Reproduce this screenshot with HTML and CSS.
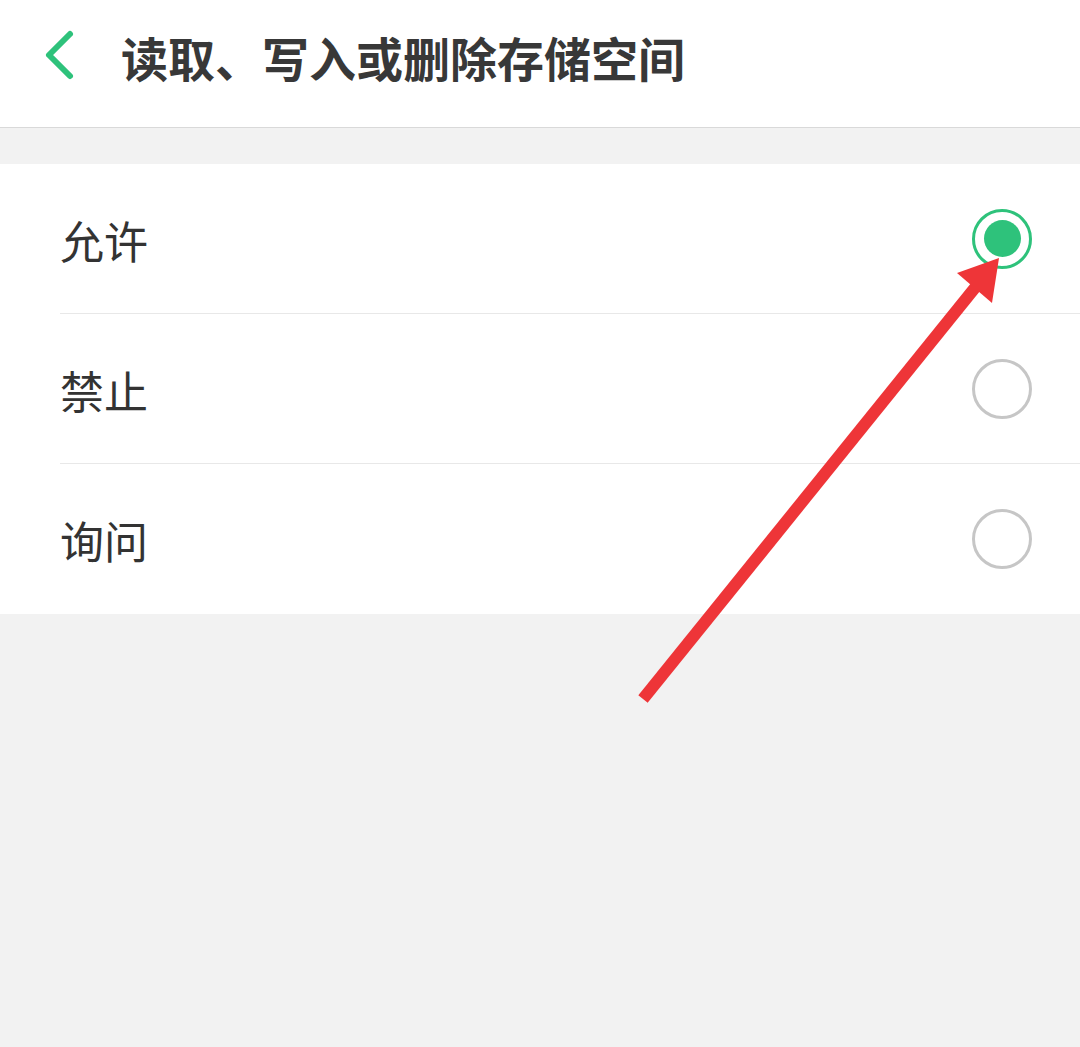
FILE: index.html
```html
<!DOCTYPE html>
<html lang="zh-CN">
<head>
<meta charset="utf-8">
<title>读取、写入或删除存储空间</title>
<link rel="stylesheet" href="styles.css">
</head>
<body>
<div class="page">
  <header class="topbar">
    <svg class="back" width="40" height="60" viewBox="0 0 40 60">
      <polyline points="30,7 9,28 30,49" fill="none" stroke="#2ec27b" stroke-width="6" stroke-linecap="round" stroke-linejoin="round"/>
    </svg>
    <h1 class="title">读取、写入或删除存储空间</h1>
  </header>
  <div class="gap"></div>
  <ul class="options">
    <li class="option"><span class="label">允许</span><span class="radio selected"></span></li>
    <li class="option"><span class="label">禁止</span><span class="radio"></span></li>
    <li class="option"><span class="label">询问</span><span class="radio"></span></li>
  </ul>
  <svg class="annot" width="1080" height="1047" viewBox="0 0 1080 1047">
    <line x1="643" y1="699" x2="978" y2="284" stroke="#ee3538" stroke-width="12"/>
    <polygon points="999,258 957,273 992,303" fill="#ee3538"/>
  </svg>
</div>
</body>
</html>
```
FILE: styles.css
```css
* { box-sizing: border-box; }
html, body {
  margin: 0;
  padding: 0;
  background: #f2f2f2;
}
body {
  font-family: "Noto Sans CJK SC", "Noto Sans", sans-serif;
  color: #333333;
}
.page {
  position: relative;
  width: 1080px;
  height: 1047px;
  overflow: hidden;
  background: #f2f2f2;
}
.topbar {
  height: 128px;
  background: #ffffff;
  border-bottom: 1px solid #d9d9d9;
  display: flex;
  align-items: center;
  padding-left: 40px;
  padding-bottom: 14px;
}
.back {
  display: block;
  flex: none;
}
.title {
  margin: 0 0 0 41px;
  font-size: 47px;
  font-weight: 700;
  line-height: 1;
  color: #383838;
  letter-spacing: 0;
}
.gap {
  height: 36px;
}
.options {
  list-style: none;
  margin: 0;
  padding: 0;
  background: #ffffff;
}
.option {
  height: 150px;
  margin-left: 60px;
  padding-right: 48px;
  display: flex;
  align-items: center;
  justify-content: space-between;
  border-bottom: 1px solid #e8e8e8;
}
.option:last-child {
  border-bottom: none;
}
.label {
  font-size: 44px;
  line-height: 1;
  color: #333333;
  margin-top: 2px;
}
.radio {
  width: 60px;
  height: 60px;
  border-radius: 50%;
  border: 3.5px solid #c6c6c6;
  flex: none;
  display: flex;
  align-items: center;
  justify-content: center;
}
.radio.selected {
  border-color: #2ec27b;
}
.radio.selected::after {
  content: "";
  width: 37px;
  height: 37px;
  border-radius: 50%;
  background: #2ec27b;
}
.annot {
  position: absolute;
  left: 0;
  top: 0;
  pointer-events: none;
}
```
